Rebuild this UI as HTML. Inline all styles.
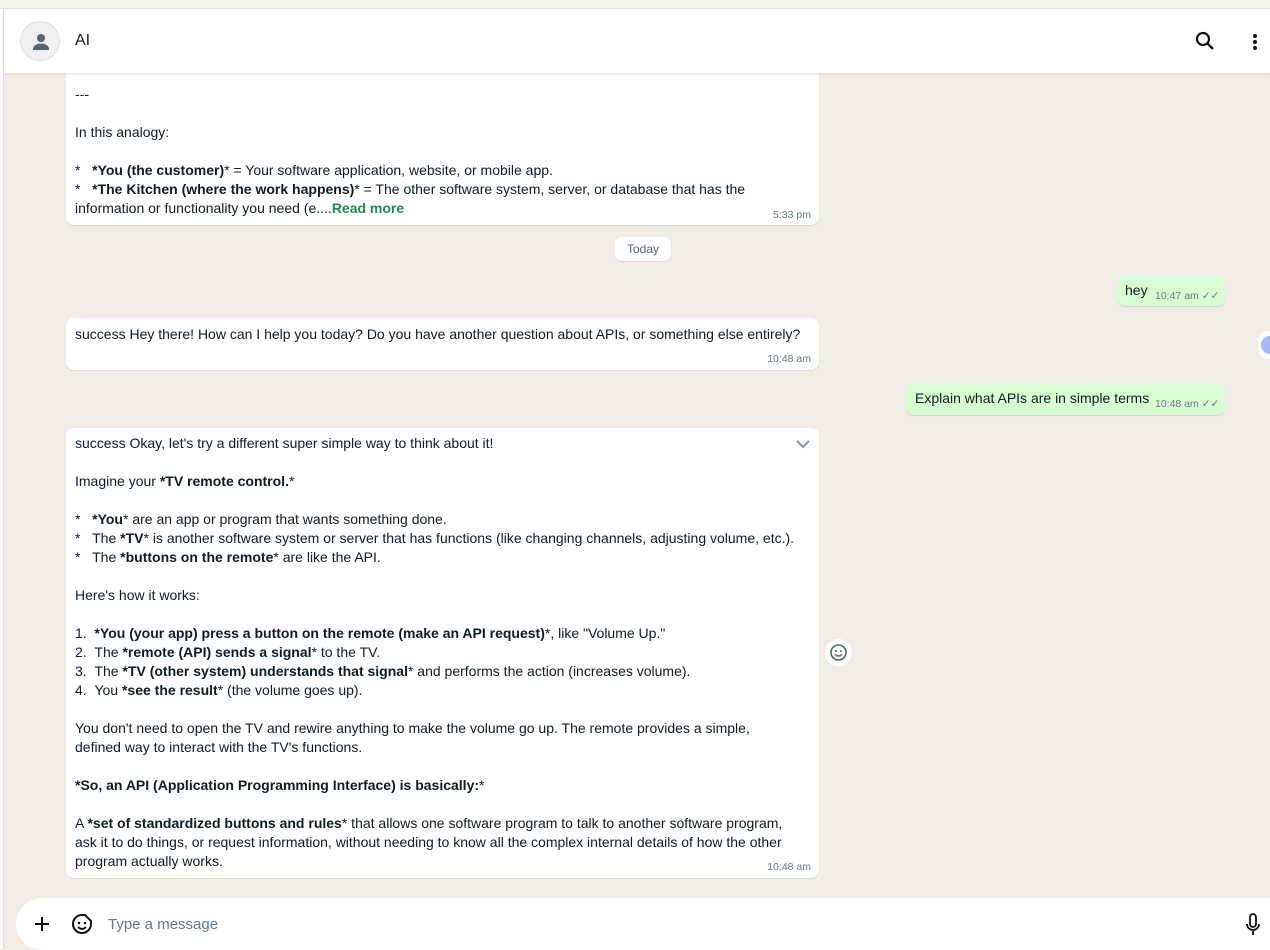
<!DOCTYPE html>
<html><head><meta charset="utf-8"><style>
*{margin:0;padding:0;box-sizing:border-box}
body{width:1270px;height:949px;overflow:hidden;background:#f1ede6;font-family:"Liberation Sans",sans-serif;font-size:14px;color:#111b21;position:relative}
.top{position:absolute;left:0;top:0;width:1270px;height:9px;background:#f3f7ee;border-bottom:1px solid #e3e8dc}
.lb{position:absolute;left:0;top:9px;width:4px;height:940px;background:#fff;border-right:1px solid #e0e0e0}
.hdr{position:absolute;left:4px;top:9px;width:1266px;height:64px;background:#fff;box-shadow:0 1px 3px rgba(0,0,0,.12);z-index:2}
.av{position:absolute;left:16px;top:12px;width:40px;height:40px;border-radius:50%;background:#f0f0f0;border:1px solid #e2e2e2}
.name{position:absolute;left:71px;top:23px;font-size:16px;color:#111b21}
.b{position:absolute;background:#fff;border-radius:8px;box-shadow:0 1px 1px rgba(0,0,0,.1)}
.g{background:#d9fdd3}
.l{position:absolute;left:9px;white-space:nowrap;line-height:19px}
.t{position:absolute;font-size:10.5px;color:#667781;white-space:nowrap}
b{font-weight:bold}
.rm{color:#1d8a55;font-weight:bold}
.today{position:absolute;left:615px;top:237px;width:56px;height:24px;background:#fff;border-radius:7px;font-size:12px;color:#54656f;text-align:center;line-height:24px;box-shadow:0 1px 1px rgba(0,0,0,.08)}
.foot{position:absolute;left:16px;top:898px;width:1254px;height:52px;background:#fff;border-radius:26px 0 0 26px}
</style></head><body>
<div class="top"></div>
<div class="lb"></div>
<div class="hdr">
<div class="av"><svg width="40" height="40" viewBox="0 0 40 40"><circle cx="20" cy="16" r="4" fill="#54656f"/><path d="M12 27c0-4 5-5.5 8-5.5s8 1.5 8 5.5v1H12z" fill="#54656f"/></svg></div>
<div class="name">AI</div>
<svg style="position:absolute;left:1190px;top:21px" width="22" height="22" viewBox="0 0 22 22"><circle cx="9" cy="9" r="6" fill="none" stroke="#111" stroke-width="2.2"/><path d="M13.5 13.5l5.5 5.5" stroke="#111" stroke-width="2.4"/></svg>
<svg style="position:absolute;left:1248px;top:23px" width="6" height="20" viewBox="0 0 6 20"><circle cx="3" cy="4" r="2" fill="#111"/><circle cx="3" cy="10" r="2" fill="#111"/><circle cx="3" cy="16" r="2" fill="#111"/></svg>
</div>

<div class="b" style="left:66px;top:60px;width:753px;height:165px">
<div class="l" style="top:25px">---</div>
<div class="l" style="top:63px">In this analogy:</div>
<div class="l" style="top:101px">*&nbsp;&nbsp;&nbsp;<b>*You (the customer)</b>* = Your software application, website, or mobile app.</div>
<div class="l" style="top:120px">*&nbsp;&nbsp;&nbsp;<b>*The Kitchen (where the work happens)</b>* = The other software system, server, or database that has the</div>
<div class="l" style="top:139px">information or functionality you need (e....<span class="rm">Read more</span></div>
<div class="t" style="right:8px;top:149px">5:33 pm</div>
</div>

<div class="today">Today</div>

<div class="b g" style="left:1117px;top:276px;width:108px;height:30px">
<div class="l" style="top:5px;left:8px">hey</div>
<div class="t" style="left:38px;top:14px">10:47 am <span style="color:#667781">✓✓</span></div>
</div>

<div class="b" style="left:66px;top:318px;width:753px;height:52px">
<div class="l" style="top:7px">success Hey there! How can I help you today? Do you have another question about APIs, or something else entirely?</div>
<div class="t" style="right:8px;top:35px">10:48 am</div>
</div>

<div class="b g" style="left:906px;top:383px;width:319px;height:32px">
<div class="l" style="top:6px;left:9px">Explain what APIs are in simple terms</div>
<div class="t" style="left:249px;top:15px">10:48 am ✓✓</div>
</div>

<div class="b" style="left:66px;top:428px;width:753px;height:450px">
<svg style="position:absolute;right:9px;top:11px" width="14" height="10" viewBox="0 0 14 10"><path d="M1 2l6 6 6-6" fill="none" stroke="#8696a0" stroke-width="2"/></svg>
<div class="l" style="top:6px">success Okay, let's try a different super simple way to think about it!</div>
<div class="l" style="top:44px">Imagine your <b>*TV remote control.</b>*</div>
<div class="l" style="top:82px">*&nbsp;&nbsp;&nbsp;<b>*You</b>* are an app or program that wants something done.</div>
<div class="l" style="top:101px">*&nbsp;&nbsp;&nbsp;The <b>*TV</b>* is another software system or server that has functions (like changing channels, adjusting volume, etc.).</div>
<div class="l" style="top:120px">*&nbsp;&nbsp;&nbsp;The <b>*buttons on the remote</b>* are like the API.</div>
<div class="l" style="top:158px">Here's how it works:</div>
<div class="l" style="top:196px">1.&nbsp;&nbsp;<b>*You (your app) press a button on the remote (make an API request)</b>*, like "Volume Up."</div>
<div class="l" style="top:215px">2.&nbsp;&nbsp;The <b>*remote (API) sends a signal</b>* to the TV.</div>
<div class="l" style="top:234px">3.&nbsp;&nbsp;The <b>*TV (other system) understands that signal</b>* and performs the action (increases volume).</div>
<div class="l" style="top:253px">4.&nbsp;&nbsp;You <b>*see the result</b>* (the volume goes up).</div>
<div class="l" style="top:291px">You don't need to open the TV and rewire anything to make the volume go up. The remote provides a simple,</div>
<div class="l" style="top:310px">defined way to interact with the TV's functions.</div>
<div class="l" style="top:348px"><b>*So, an API (Application Programming Interface) is basically:</b>*</div>
<div class="l" style="top:386px">A <b>*set of standardized buttons and rules</b>* that allows one software program to talk to another software program,</div>
<div class="l" style="top:405px">ask it to do things, or request information, without needing to know all the complex internal details of how the other</div>
<div class="l" style="top:424px">program actually works.</div>
<div class="t" style="right:8px;top:433px">10:48 am</div>
</div>

<div style="position:absolute;left:825px;top:639px;width:27px;height:27px;border-radius:50%;background:#fff"><svg width="27" height="27" viewBox="0 0 27 27"><circle cx="13.5" cy="13.5" r="7.5" fill="none" stroke="#54656f" stroke-width="1.6"/><circle cx="11" cy="12" r="1" fill="#54656f"/><circle cx="16" cy="12" r="1" fill="#54656f"/><path d="M10 15.5q3.5 3 7 0" fill="none" stroke="#54656f" stroke-width="1.4"/></svg></div>

<div style="position:absolute;left:1258px;top:331px;width:20px;height:28px;border-radius:14px;background:#fff"><div style="margin:5px 0 0 3px;width:18px;height:18px;border-radius:50%;background:#a9b7f5"></div></div>

<div class="foot">
<svg style="position:absolute;left:17px;top:17px" width="18" height="18" viewBox="0 0 18 18"><path d="M9 2v14M2 9h14" stroke="#111" stroke-width="2"/></svg>
<svg style="position:absolute;left:55px;top:15px" width="22" height="22" viewBox="0 0 22 22"><path d="M11 2a9 9 0 1 0 9 9V8l-6-6z" fill="none" stroke="#111" stroke-width="2"/><circle cx="8" cy="10" r="1.3" fill="#111"/><circle cx="14" cy="10" r="1.3" fill="#111"/><path d="M7 14q4 4 8 0" fill="none" stroke="#111" stroke-width="1.8"/></svg>
<div style="position:absolute;left:92px;top:18px;font-size:15px;color:#667781">Type a message</div>
<svg style="position:absolute;left:1229px;top:15px" width="16" height="24" viewBox="0 0 16 24"><rect x="5" y="1" width="6" height="13" rx="3" fill="none" stroke="#111" stroke-width="1.8"/><path d="M2 11a6 6 0 0 0 12 0M8 17v5" fill="none" stroke="#111" stroke-width="1.8"/></svg>
</div>
</body></html>
